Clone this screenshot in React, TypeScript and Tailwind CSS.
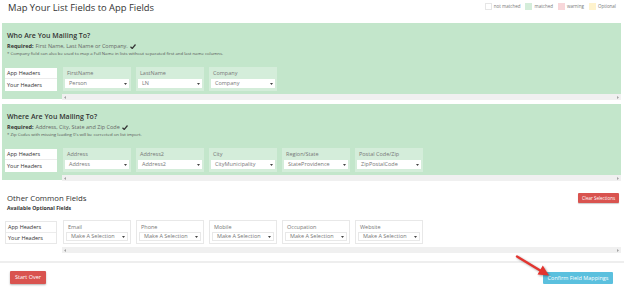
import React from 'react';

type Field = { label: string; value: string };

const whoFields: Field[] = [
  { label: 'FirstName', value: 'Person' },
  { label: 'LastName', value: 'LN' },
  { label: 'Company', value: 'Company' },
];

const whereFields: Field[] = [
  { label: 'Address', value: 'Address' },
  { label: 'Address2', value: 'Address2' },
  { label: 'City', value: 'CityMunicipality' },
  { label: 'Region/State', value: 'StateProvidence' },
  { label: 'Postal Code/Zip', value: 'ZipPostalCode' },
];

const otherFields: Field[] = [
  { label: 'Email', value: 'Make A Selection' },
  { label: 'Phone', value: 'Make A Selection' },
  { label: 'Mobile', value: 'Make A Selection' },
  { label: 'Occupation', value: 'Make A Selection' },
  { label: 'Website', value: 'Make A Selection' },
];

const legend = [
  { label: 'not matched', box: 'bg-white border border-[#e6e6e6]' },
  { label: 'matched', box: 'bg-[#d4edda]' },
  { label: 'warning', box: 'bg-[#f8d7da]' },
  { label: 'Optional', box: 'bg-[#fff3cd]' },
];

function Caret() {
  return (
    <svg width="3" height="2" viewBox="0 0 3 2" className="shrink-0">
      <path d="M0 0h3L1.5 2z" fill="#444" />
    </svg>
  );
}

function Scrollbar() {
  return (
    <div className="mt-[3px] flex h-[6px] items-center justify-between bg-[#f0f0f0] px-[2px]">
      <svg width="2" height="3" viewBox="0 0 2 3">
        <path d="M2 0v3L0 1.5z" fill="#a3a3a3" />
      </svg>
      <svg width="2" height="3" viewBox="0 0 2 3">
        <path d="M0 0v3L2 1.5z" fill="#a3a3a3" />
      </svg>
    </div>
  );
}

function HeaderBox({ bordered }: { bordered?: boolean }) {
  return (
    <div
      className={`mt-[1px] flex h-[23px] w-[52px] shrink-0 flex-col bg-white text-[5.5px] text-[#333] ${
        bordered ? 'border border-[#e8e8e8]' : ''
      }`}
    >
      <div className="flex h-[11px] items-center border-b border-[#ececec] pl-[2px]">App Headers</div>
      <div className="flex flex-1 items-center pl-[2px]">Your Headers</div>
    </div>
  );
}

function FieldCard({ field, plain }: { field: Field; plain?: boolean }) {
  return (
    <div
      className={`flex h-[24px] w-[68px] shrink-0 flex-col px-[2px] pb-[2px] pt-[1px] ${
        plain ? 'border border-[#e8e8e8] bg-white' : 'bg-[#d4edda]'
      }`}
    >
      <div className="flex h-[11px] items-center pl-[2px] text-[5.5px] text-[#777]">{field.label}</div>
      <div
        className={`flex h-[9px] items-center justify-between bg-white pl-[4px] pr-[2px] text-[5.5px] text-[#777] ${
          plain ? 'border border-[#e8e8e8]' : ''
        }`}
      >
        <span>{field.value}</span>
        <Caret />
      </div>
    </div>
  );
}

function MappingRow({ fields, plain }: { fields: Field[]; plain?: boolean }) {
  return (
    <div className="flex gap-[5px]">
      <HeaderBox bordered={plain} />
      <div className="flex flex-1 flex-col">
        <div className="flex gap-[5px] pl-[1px]">
          {fields.map((f) => (
            <FieldCard key={f.label} field={f} plain={plain} />
          ))}
        </div>
        <Scrollbar />
      </div>
    </div>
  );
}

function Check() {
  return (
    <svg width="6" height="5" viewBox="0 0 12 10" className="ml-[2px] inline-block">
      <path d="M1 5.5l3.5 3.5L11 1" stroke="#333" strokeWidth="2.4" fill="none" />
    </svg>
  );
}

function GreenSection({
  title,
  required,
  note,
  fields,
}: {
  title: string;
  required: string;
  note: string;
  fields: Field[];
}) {
  return (
    <section className="ml-[2px] mr-[3px] flex h-[76px] flex-col bg-[#c3e6cb] pl-[3px] pt-[8px]">
      <h2 className="pl-[2px] text-[7px] font-semibold leading-[10px] text-[#333]">{title}</h2>
      <p className="mt-[2px] flex items-center pl-[2px] text-[5.5px] leading-[7px] text-[#666]">
        <b className="mr-[2px] font-bold text-[#333]">Required:</b>
        {required}
        <Check />
      </p>
      <p className="pl-[2px] text-[4.3px] leading-[6px] text-[#555]">{note}</p>
      <div className="mt-[11px]">
        <MappingRow fields={fields} />
      </div>
    </section>
  );
}

export default function App() {
  return (
    <div className="relative h-[287px] w-[624px] overflow-hidden bg-white font-['Open_Sans',sans-serif] text-[#333]">
      <header className="flex h-[23px] items-start justify-between">
        <h1 className="pl-[8px] pt-[1px] text-[9.4px] leading-[14px] font-medium text-[#333]">Map Your List Fields to App Fields</h1>
        <div className="flex items-center gap-[5px] pr-[8px] pt-[3px]">
          {legend.map((l) => (
            <div key={l.label} className="flex items-center gap-[2px] text-[4.5px] text-[#777]">
              <span className={`h-[7px] w-[7px] ${l.box}`} />
              <span>{l.label}</span>
            </div>
          ))}
        </div>
      </header>

      <GreenSection
        title="Who Are You Mailing To?"
        required="First Name, Last Name or Company."
        note="* Company field can also be used to map a Full Name in lists without separated first and last name columns."
        fields={whoFields}
      />

      <div className="h-[5px]" />

      <GreenSection
        title="Where Are You Mailing To?"
        required="Address, City, State and Zip Code"
        note="* Zip Codes with missing leading 0's will be corrected on list import."
        fields={whereFields}
      />

      <section className="ml-[2px] mr-[3px] flex flex-col pl-[3px] pt-[13px]">
        <div className="flex items-start justify-between pr-[2px]">
          <div>
            <h2 className="pl-[2px] text-[7.8px] leading-[10px] text-[#333]">Other Common Fields</h2>
            <p className="mt-[2px] pl-[2px] text-[5.2px] font-bold leading-[7px] text-[#333]">Available Optional Fields</p>
          </div>
          <button className="h-[10px] w-[41px] rounded-[1px] bg-[#d9534f] text-[4.5px] text-white shadow-[0_1px_1px_rgba(0,0,0,0.2)]">
            Clear Selections
          </button>
        </div>
        <div className="mt-[8px]">
          <MappingRow fields={otherFields} plain />
        </div>
      </section>

      <div className="mt-[8px] border-t-2 border-[#eeeeee]" />

      <footer className="flex items-start justify-between pl-[10px] pr-[11px] pt-[8px]">
        <button className="h-[13px] w-[36px] rounded-[1px] bg-[#d9534f] text-[5.5px] text-white shadow-[0_1px_2px_rgba(0,0,0,0.3)]">
          Start Over
        </button>
        <button className="mt-[1px] h-[12px] w-[70px] rounded-[1px] bg-[#5bc0de] text-[5.5px] text-white">
          Confirm Field Mappings
        </button>
      </footer>

      <svg className="pointer-events-none absolute left-0 top-0" width="624" height="287">
        <g style={{ filter: 'drop-shadow(1px 1px 1px rgba(0,0,0,0.35))' }}>
          <line x1="517" y1="256.5" x2="541" y2="271" stroke="#e3342f" strokeWidth="2.4" strokeLinecap="round" />
          <polygon points="549,275.5 537.5,274.5 542.8,265.5" fill="#e3342f" />
        </g>
      </svg>
    </div>
  );
}
